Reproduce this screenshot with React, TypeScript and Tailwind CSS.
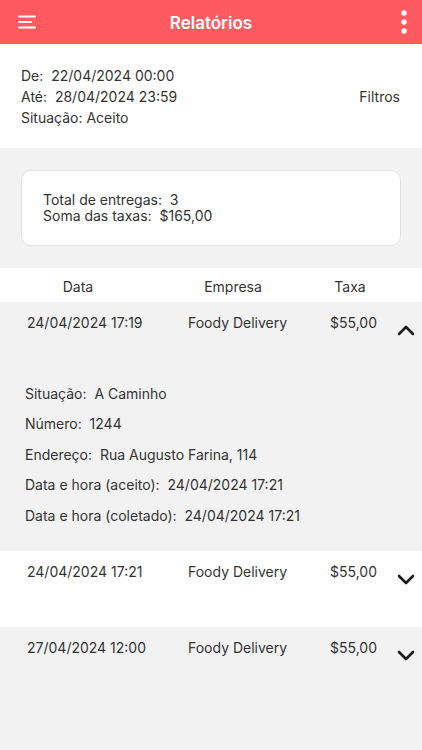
import React from "react";

const rows = [
  { date: "24/04/2024 17:19", company: "Foody Delivery", fee: "$55,00", open: true },
  { date: "24/04/2024 17:21", company: "Foody Delivery", fee: "$55,00", open: false },
  { date: "27/04/2024 12:00", company: "Foody Delivery", fee: "$55,00", open: false },
];

function Chevron({ up }: { up: boolean }) {
  return (
    <svg width="18" height="12" viewBox="0 0 18 12" className="block">
      {up ? (
        <path d="M2 10 L9 3 L16 10" fill="none" stroke="#1a1a1a" strokeWidth="2.6" strokeLinecap="round" strokeLinejoin="round" />
      ) : (
        <path d="M2 3 L9 10 L16 3" fill="none" stroke="#1a1a1a" strokeWidth="2.6" strokeLinecap="round" strokeLinejoin="round" />
      )}
    </svg>
  );
}

export default function App() {
  return (
    <div className="w-[422px] h-[750px] overflow-hidden bg-[#f2f2f2] text-[#333333] text-[14px]" style={{ fontFamily: "Inter, 'Noto Sans', sans-serif" }}>
      {/* Top bar */}
      <div className="h-[44px] bg-[#ff5a5f] flex items-center justify-between px-[18px] relative">
        <svg width="19" height="14" viewBox="0 0 19 14">
          <rect x="0" y="0.5" width="18" height="2" rx="1" fill="#fff" />
          <rect x="0" y="6" width="14" height="2" rx="1" fill="#fff" />
          <rect x="0" y="11.5" width="18" height="2" rx="1" fill="#fff" />
        </svg>
        <div className="absolute left-0 right-0 top-[12px] text-center text-white text-[17px] leading-[22px] font-semibold pointer-events-none">Relatórios</div>
        <svg width="8" height="24" viewBox="0 0 8 24" className="mr-[-4px]">
          <circle cx="4" cy="3" r="2.7" fill="#fff" />
          <circle cx="4" cy="12" r="2.7" fill="#fff" />
          <circle cx="4" cy="21" r="2.7" fill="#fff" />
        </svg>
      </div>

      {/* Filters */}
      <div className="bg-white h-[104px] flex items-center justify-between pl-[21px] pr-[22px]">
        <div className="leading-[21px]">
          <div>De:&nbsp; 22/04/2024 00:00</div>
          <div>Até:&nbsp; 28/04/2024 23:59</div>
          <div>Situação: Aceito</div>
        </div>
        <div>Filtros</div>
      </div>

      {/* Summary */}
      <div className="h-[120px] px-[21px] py-[22px]">
        <div className="h-[76px] bg-white rounded-[10px] border border-[#e2e2e2] flex flex-col justify-center pl-[21px] leading-[16.5px]">
          <div>Total de entregas:&nbsp; 3</div>
          <div>Soma das taxas:&nbsp; $165,00</div>
        </div>
      </div>

      {/* Table header */}
      <div className="bg-white h-[34px] flex items-center pt-[3px]">
        <div className="w-[156px] text-center">Data</div>
        <div className="w-[154px] text-center">Empresa</div>
        <div className="w-[80px] text-center">Taxa</div>
      </div>

      {rows.map((r, i) => (
        <div
          key={i}
          className={`${i === 1 ? "bg-white" : "bg-[#f2f2f2]"} ${r.open ? "h-[249px]" : i === 1 ? "h-[76px]" : "h-[124px]"}`}
        >
          <div className="flex items-start pt-[11px] pl-[27px] leading-[20px]">
            <div className="w-[161px]">{r.date}</div>
            <div className="w-[142px]">{r.company}</div>
            <div className="w-[64px]">{r.fee}</div>
            <div className="mt-[11px] ml-[3px]">
              <Chevron up={r.open} />
            </div>
          </div>
          {r.open && (
            <div className="pl-[25px] pt-[48px] flex flex-col gap-[10.4px] leading-[20px]">
              <div>Situação:&nbsp; A Caminho</div>
              <div>Número:&nbsp; 1244</div>
              <div>Endereço:&nbsp; Rua Augusto Farina, 114</div>
              <div>Data e hora (aceito):&nbsp; 24/04/2024 17:21</div>
              <div>Data e hora (coletado):&nbsp; 24/04/2024 17:21</div>
            </div>
          )}
        </div>
      ))}
    </div>
  );
}
